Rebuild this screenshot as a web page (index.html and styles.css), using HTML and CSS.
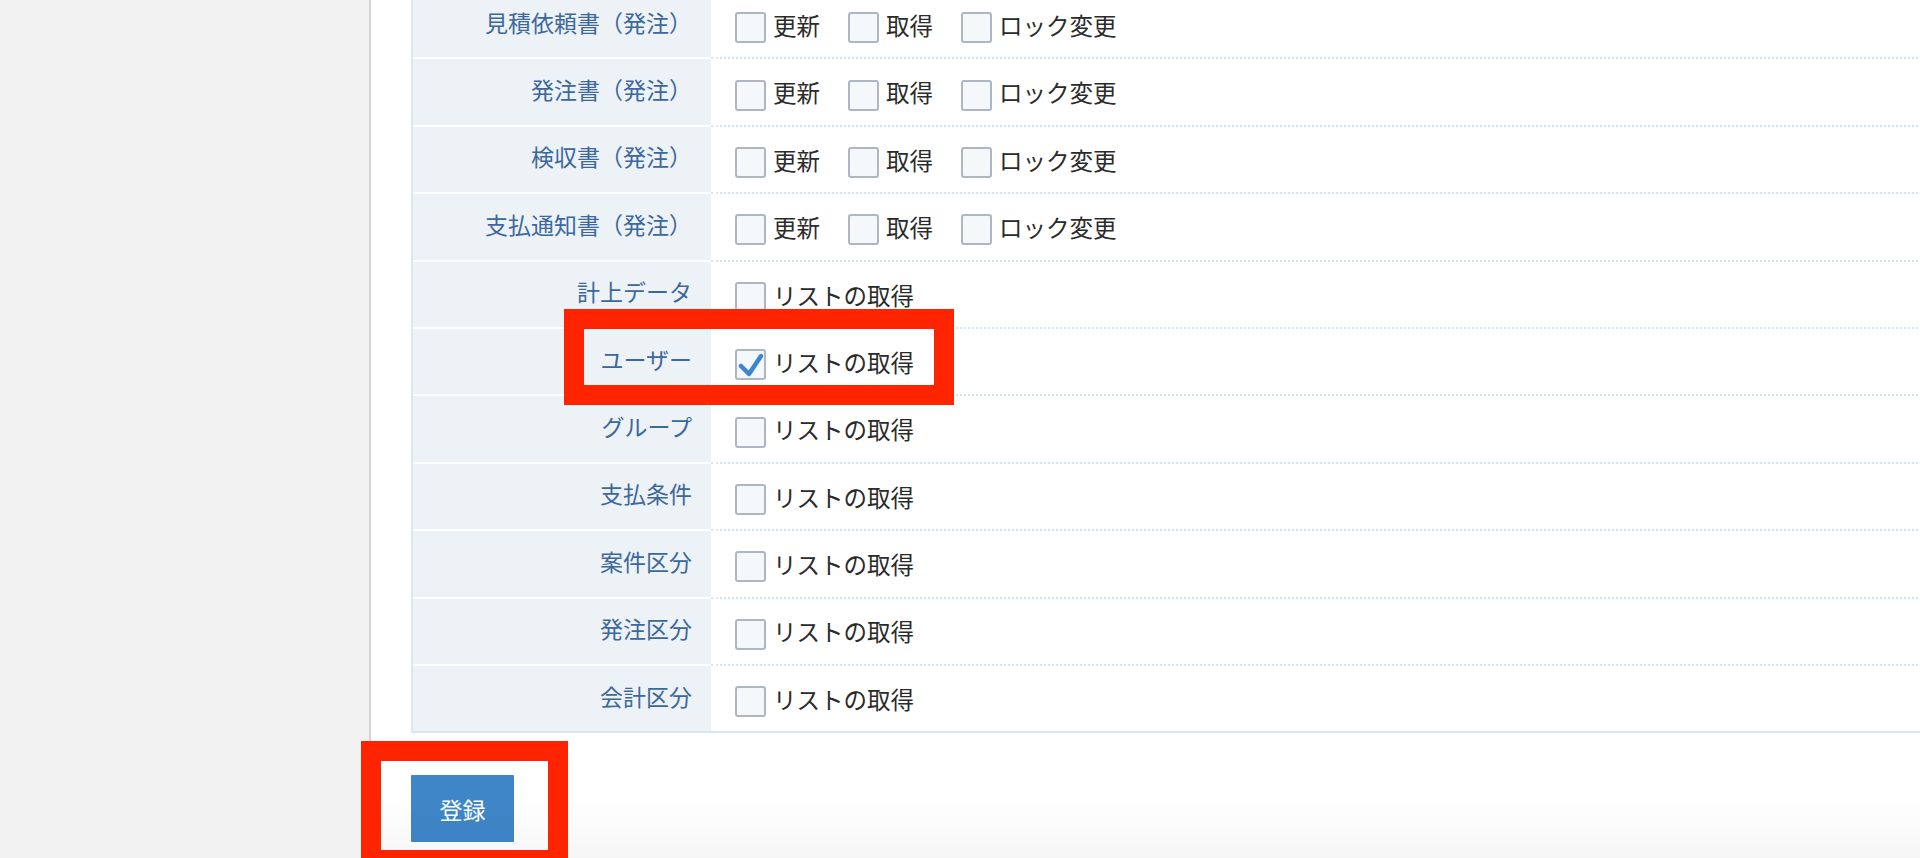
FILE: index.html
```html
<!DOCTYPE html>
<html lang="ja">
<head>
  <meta charset="UTF-8">
  <title>権限設定</title>
  <link rel="stylesheet" href="styles.css">
</head>
<body>
  <div class="app">
    <aside class="sidebar"></aside>
    <main class="main">
      <div class="perm-table">
        <div class="perm-row">
          <div class="perm-label">見積依頼書（発注）</div>
          <div class="perm-value">
            <label class="opt"><span class="cb"></span>更新</label>
            <label class="opt"><span class="cb"></span>取得</label>
            <label class="opt"><span class="cb"></span>ロック変更</label>
          </div>
        </div>
        <div class="perm-row">
          <div class="perm-label">発注書（発注）</div>
          <div class="perm-value">
            <label class="opt"><span class="cb"></span>更新</label>
            <label class="opt"><span class="cb"></span>取得</label>
            <label class="opt"><span class="cb"></span>ロック変更</label>
          </div>
        </div>
        <div class="perm-row">
          <div class="perm-label">検収書（発注）</div>
          <div class="perm-value">
            <label class="opt"><span class="cb"></span>更新</label>
            <label class="opt"><span class="cb"></span>取得</label>
            <label class="opt"><span class="cb"></span>ロック変更</label>
          </div>
        </div>
        <div class="perm-row">
          <div class="perm-label">支払通知書（発注）</div>
          <div class="perm-value">
            <label class="opt"><span class="cb"></span>更新</label>
            <label class="opt"><span class="cb"></span>取得</label>
            <label class="opt"><span class="cb"></span>ロック変更</label>
          </div>
        </div>
        <div class="perm-row">
          <div class="perm-label">計上データ</div>
          <div class="perm-value">
            <label class="opt"><span class="cb"></span>リストの取得</label>
          </div>
        </div>
        <div class="perm-row">
          <div class="perm-label">ユーザー</div>
          <div class="perm-value">
            <label class="opt"><span class="cb checked"><svg viewBox="0 0 31 31" width="31" height="31"><path d="M6 17 L14 25 L26 7" fill="none" stroke="#3a86cf" stroke-width="4.5" stroke-linecap="round" stroke-linejoin="round"/></svg></span>リストの取得</label>
          </div>
        </div>
        <div class="perm-row">
          <div class="perm-label">グループ</div>
          <div class="perm-value">
            <label class="opt"><span class="cb"></span>リストの取得</label>
          </div>
        </div>
        <div class="perm-row">
          <div class="perm-label">支払条件</div>
          <div class="perm-value">
            <label class="opt"><span class="cb"></span>リストの取得</label>
          </div>
        </div>
        <div class="perm-row">
          <div class="perm-label">案件区分</div>
          <div class="perm-value">
            <label class="opt"><span class="cb"></span>リストの取得</label>
          </div>
        </div>
        <div class="perm-row">
          <div class="perm-label">発注区分</div>
          <div class="perm-value">
            <label class="opt"><span class="cb"></span>リストの取得</label>
          </div>
        </div>
        <div class="perm-row">
          <div class="perm-label">会計区分</div>
          <div class="perm-value">
            <label class="opt"><span class="cb"></span>リストの取得</label>
          </div>
        </div>
      </div>
      <div class="actions">
        <button class="btn-primary">登録</button>
      </div>
    </main>

    <!-- annotation boxes -->
    <div class="mark mark-user"></div>
    <div class="mark mark-submit"></div>
  </div>
</body>
</html>
```

FILE: styles.css
```css
html, body {
  margin: 0;
  height: 100%;
  overflow: hidden;
}

body {
  font-family: "Noto Sans CJK JP", "Noto Sans", sans-serif;
  background: #fff;
  color: #333;
}

.app {
  position: relative;
  display: flex;
  height: 858px;
}

.sidebar {
  width: 369px;
  flex: 0 0 369px;
  background: #f2f2f2;
  border-right: 2px solid #d3d3d3;
}

.main {
  position: relative;
  flex: 1;
  padding-left: 40px;
  overflow: hidden;
}

/* faint footer fade */
.main::after {
  content: "";
  position: absolute;
  left: 0;
  right: 0;
  bottom: 0;
  height: 60px;
  background: linear-gradient(to bottom, rgba(0, 0, 0, 0), rgba(0, 0, 0, 0.035));
  pointer-events: none;
}

.perm-table {
  margin-top: -8px;
  width: calc(100% + 20px);
  border-left: 2px solid #dbe7f3;
  border-bottom: 2px solid #d8e6f4;
}

.perm-row {
  display: grid;
  grid-template-columns: 298px 1fr;
  height: 67.4px;
}

.perm-row:last-child {
  height: 65.4px;
}

.perm-label {
  background: #edf2f7;
  border-bottom: 2px solid #fff;
  color: #3d689c;
  font-size: 23px;
  text-align: right;
  padding-right: 19px;
  padding-bottom: 6px;
  display: flex;
  align-items: center;
  justify-content: flex-end;
  box-sizing: border-box;
}

.perm-value {
  display: flex;
  align-items: center;
  padding-left: 24px;
  padding-top: 2px;
  border-bottom: 2px dotted #d4e3f2;
  box-sizing: border-box;
}

.perm-row:last-child .perm-label,
.perm-row:last-child .perm-value {
  border-bottom: none;
}

.opt {
  display: flex;
  align-items: center;
  font-size: 23.5px;
  color: #2b2b2b;
  margin-right: 28px;
  line-height: 1;
}

.cb {
  width: 31px;
  height: 31px;
  box-sizing: border-box;
  border: 2px solid #adb6c1;
  border-radius: 3px;
  background: #f5f8fb;
  margin-right: 7px;
  margin-top: 4px;
  position: relative;
}

.cb svg {
  position: absolute;
  left: -2px;
  top: -2px;
}

.actions {
  padding-top: 42px;
}

.btn-primary {
  width: 103px;
  height: 67px;
  border: none;
  border-radius: 1px;
  background: #3f86c8;
  color: #fff;
  font-family: "Noto Sans CJK JP", "Noto Sans", sans-serif;
  font-size: 23px;
  padding: 0;
  cursor: pointer;
}

.mark {
  position: absolute;
  border: 20px solid #ff2400;
  box-sizing: border-box;
  pointer-events: none;
}

.mark-user {
  left: 564px;
  top: 309px;
  width: 390px;
  height: 96px;
}

.mark-submit {
  left: 361px;
  top: 741px;
  width: 207px;
  height: 129px;
}
```
